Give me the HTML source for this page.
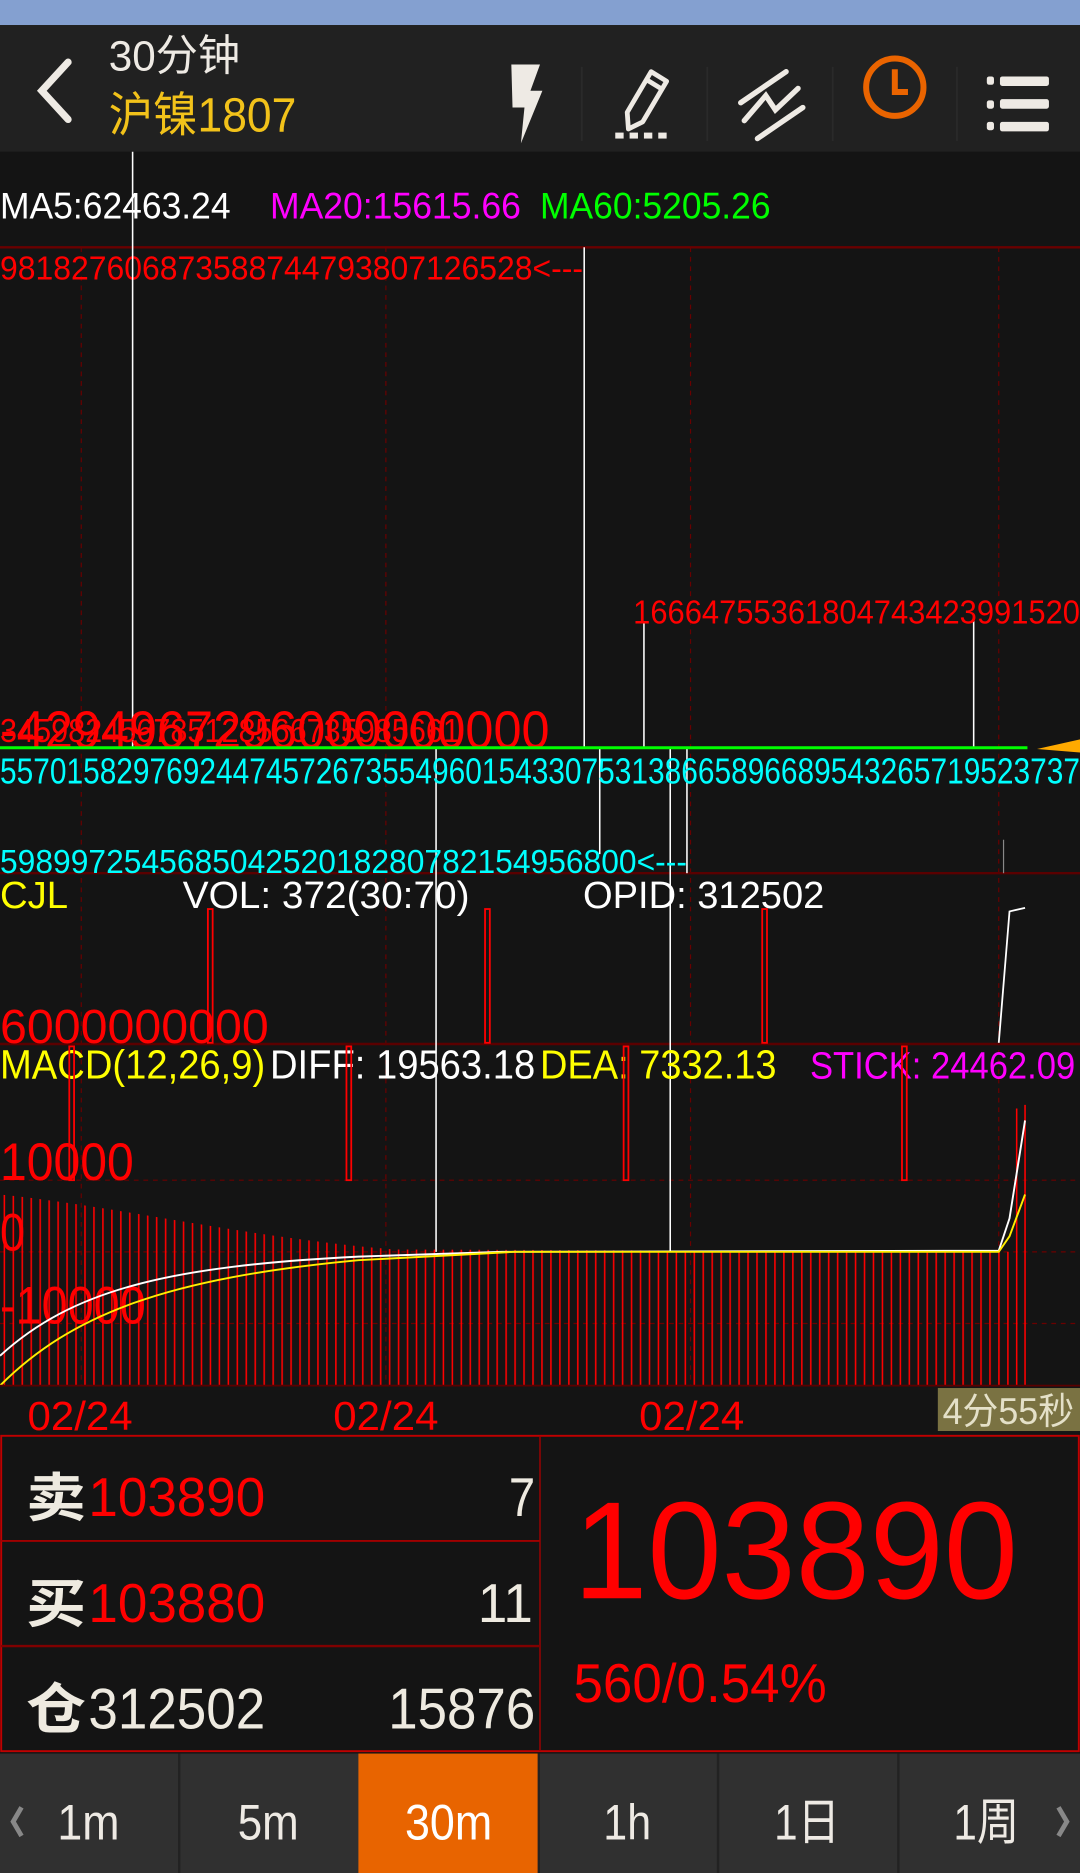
<!DOCTYPE html>
<html><head><meta charset="utf-8"><style>
html,body{margin:0;padding:0;background:#141414;overflow:hidden}
svg{display:block}
text{font-family:"Liberation Sans","Noto Sans CJK SC",sans-serif}
</style></head><body>
<svg width="1080" height="1873" viewBox="0 0 904 1568" preserveAspectRatio="none" xmlns="http://www.w3.org/2000/svg">
<defs>
<pattern id="bars" x="0" y="0" width="7.5" height="10" patternUnits="userSpaceOnUse">
<rect x="3" y="0" width="1.3" height="10" fill="#ff0000"/>
</pattern>
</defs>
<rect x="0" y="0" width="904" height="1568" fill="#141414"/>
<rect x="0" y="0" width="904" height="21" fill="#84a0d0"/>
<rect x="0" y="21" width="904" height="106" fill="#212121"/>
<path d="M57 52 L35 76 L57 100" stroke="#eeeae4" stroke-width="6" fill="none" stroke-linecap="round"/>
<text x="91" y="59" font-size="36" fill="#eeeae4" textLength="110" lengthAdjust="spacingAndGlyphs">30分钟</text>
<text x="91" y="110" font-size="40" fill="#f2c21a" textLength="157" lengthAdjust="spacingAndGlyphs">沪镍1807</text>
<path d="M428 54 L452 54 L444 76 L454 76 L436 120 L439 90 L429 90 Z" fill="#eeeae4"/>
<g stroke="#2a2a2a" stroke-width="1.5"><line x1="487" y1="56" x2="487" y2="118"/><line x1="592" y1="56" x2="592" y2="118"/><line x1="697" y1="56" x2="697" y2="118"/><line x1="801" y1="56" x2="801" y2="118"/></g>
<path d="M545 60 L558 68 L538 102 L526 108 L525 94 Z" stroke="#eeeae4" stroke-width="4" fill="none" stroke-linejoin="round"/>
<line x1="540" y1="66" x2="553" y2="74" stroke="#eeeae4" stroke-width="4"/>
<g fill="#eeeae4"><rect x="515" y="111" width="7" height="5"/><rect x="527" y="111" width="7" height="5"/><rect x="539" y="111" width="7" height="5"/><rect x="551" y="111" width="7" height="5"/></g>
<path d="M620 86 L658 60 M623 101 L641 80 L649 92 L668 74 M634 116 L672 90" stroke="#eeeae4" stroke-width="4.5" fill="none" stroke-linecap="round"/>
<circle cx="749" cy="73" r="24" stroke="#ea6400" stroke-width="5" fill="none"/>
<path d="M749 58 L749 77 L760 77" stroke="#ea6400" stroke-width="5" fill="none"/>
<g fill="#eeeae4"><rect x="826" y="64" width="6" height="7" rx="2"/><rect x="826" y="84" width="6" height="7" rx="2"/><rect x="826" y="102" width="6" height="7" rx="2"/>
<rect x="837" y="64" width="41" height="8" rx="2"/><rect x="837" y="83" width="41" height="8" rx="2"/><rect x="837" y="102" width="41" height="8" rx="2"/></g>

<g stroke="#6a0000" stroke-width="1" stroke-dasharray="4,4">
<line x1="68" y1="207" x2="68" y2="1160"/><line x1="323" y1="207" x2="323" y2="1160"/><line x1="578" y1="207" x2="578" y2="1160"/><line x1="836" y1="207" x2="836" y2="1160"/>
<line x1="0" y1="988" x2="904" y2="988"/><line x1="0" y1="1048" x2="904" y2="1048"/><line x1="0" y1="1108" x2="904" y2="1108"/>
</g>
<line x1="0" y1="207" x2="904" y2="207" stroke="#6a0000" stroke-width="2"/>
<line x1="0" y1="731" x2="904" y2="731" stroke="#5a0000" stroke-width="2"/>
<line x1="0" y1="874" x2="904" y2="874" stroke="#5a0000" stroke-width="2"/>

<text x="0" y="183" font-size="31" fill="#ffffff" textLength="193" lengthAdjust="spacingAndGlyphs">MA5:62463.24</text>
<text x="226" y="183" font-size="31" fill="#ff00ff" textLength="210" lengthAdjust="spacingAndGlyphs">MA20:15615.66</text>
<text x="452" y="183" font-size="31" fill="#00ff00" textLength="193" lengthAdjust="spacingAndGlyphs">MA60:5205.26</text>
<text x="0" y="234" font-size="28" fill="#ff0000" textLength="488" lengthAdjust="spacingAndGlyphs">981827606873588744793807126528&lt;---</text>

<g stroke="#ffffff" stroke-width="1.3">
<line x1="111" y1="127" x2="111" y2="626"/><line x1="489" y1="207" x2="489" y2="626"/>
<line x1="539" y1="520" x2="539" y2="626"/><line x1="815" y1="520" x2="815" y2="626"/>
<line x1="365" y1="626" x2="365" y2="1048"/><line x1="561" y1="626" x2="561" y2="1048"/>
<line x1="502" y1="626" x2="502" y2="715"/><line x1="575" y1="626" x2="575" y2="731"/>
</g>
<line x1="840" y1="703" x2="840" y2="731" stroke="#888" stroke-width="1"/>
<text x="530" y="522" font-size="28" fill="#ff0000" textLength="374" lengthAdjust="spacingAndGlyphs">16664755361804743423991520</text>
<text x="0" y="621" font-size="28" fill="#ff0000" textLength="385" lengthAdjust="spacingAndGlyphs">345982456785128566735985661</text>
<text x="0" y="626" font-size="44" fill="#ff0000" textLength="460" lengthAdjust="spacingAndGlyphs">-4294967296000000000</text>
<line x1="0" y1="626" x2="860" y2="626" stroke="#00ff00" stroke-width="2.5"/>
<path d="M868 627 L904 619 L904 630 Z" fill="#ffaa00"/>
<text x="0" y="656" font-size="30" fill="#00ffff" textLength="904" lengthAdjust="spacingAndGlyphs">55701582976924474572673554960154330753138665896689543265719523737</text>
<text x="0" y="731" font-size="28" fill="#00ffff" textLength="575" lengthAdjust="spacingAndGlyphs">598997254568504252018280782154956800&lt;---</text>

<text x="0" y="760" font-size="32" fill="#ffff00" textLength="57" lengthAdjust="spacingAndGlyphs">CJL</text>
<text x="153" y="760" font-size="32" fill="#ffffff" textLength="240" lengthAdjust="spacingAndGlyphs">VOL: 372(30:70)</text>
<text x="488" y="760" font-size="32" fill="#ffffff" textLength="202" lengthAdjust="spacingAndGlyphs">OPID: 312502</text>
<g stroke="#ff0000" stroke-width="1.5" fill="none">
<rect x="174" y="761" width="4" height="112"/><rect x="406" y="761" width="4" height="112"/><rect x="638" y="761" width="4" height="112"/>
</g>
<path d="M836 873 L845 763 L858 760" stroke="#ffffff" stroke-width="1.5" fill="none"/>
<text x="0" y="873" font-size="40" fill="#ff0000" textLength="225" lengthAdjust="spacingAndGlyphs">6000000000</text>

<text x="0" y="903" font-size="34" fill="#ffff00" textLength="222" lengthAdjust="spacingAndGlyphs">MACD(12,26,9)</text>
<text x="226" y="903" font-size="34" fill="#ffffff" textLength="222" lengthAdjust="spacingAndGlyphs">DIFF: 19563.18</text>
<text x="452" y="903" font-size="34" fill="#ffff00" textLength="198" lengthAdjust="spacingAndGlyphs">DEA: 7332.13</text>
<text x="678" y="903" font-size="32" fill="#ff00ff" textLength="222" lengthAdjust="spacingAndGlyphs">STICK: 24462.09</text>
<g stroke="#ff0000" stroke-width="1.5" fill="none">
<rect x="58" y="876" width="4" height="112"/><rect x="290" y="876" width="4" height="112"/><rect x="522" y="876" width="4" height="112"/><rect x="755" y="876" width="4" height="112"/>
</g>
<path d="M0 1000 C100 1010 200 1035 330 1046 L850 1048 L850 1160 L0 1160 Z" fill="url(#bars)"/>
<line x1="851" y1="928" x2="851" y2="1160" stroke="#ff0000" stroke-width="1.3"/>
<line x1="858" y1="925" x2="858" y2="1160" stroke="#ff0000" stroke-width="1.3"/>
<text x="0" y="988" font-size="44" fill="#ff0000" textLength="112" lengthAdjust="spacingAndGlyphs">10000</text>
<text x="0" y="1047" font-size="44" fill="#ff0000" textLength="21" lengthAdjust="spacingAndGlyphs">0</text>
<text x="0" y="1108" font-size="44" fill="#ff0000" textLength="122" lengthAdjust="spacingAndGlyphs">-10000</text>
<path d="M0 1135 C60 1080 140 1060 300 1052 L420 1048 L836 1047 L845 1020 L858 938" stroke="#ffffff" stroke-width="1.6" fill="none"/>
<path d="M0 1160 C60 1100 140 1070 300 1055 L430 1048 L836 1048 L845 1035 L858 1000" stroke="#ffee00" stroke-width="1.6" fill="none"/>
<line x1="0" y1="1160" x2="904" y2="1160" stroke="#5a0000" stroke-width="1.5"/>

<text x="23" y="1197" font-size="34" fill="#ff0000" textLength="88" lengthAdjust="spacingAndGlyphs">02/24</text>
<text x="279" y="1197" font-size="34" fill="#ff0000" textLength="88" lengthAdjust="spacingAndGlyphs">02/24</text>
<text x="535" y="1197" font-size="34" fill="#ff0000" textLength="88" lengthAdjust="spacingAndGlyphs">02/24</text>
<rect x="785" y="1162" width="119" height="36" fill="#7a7242"/>
<text x="789" y="1192" font-size="31" fill="#e4e0c8" textLength="110" lengthAdjust="spacingAndGlyphs">4分55秒</text>

<rect x="1" y="1202" width="902" height="264" fill="#141414" stroke="#c00000" stroke-width="1.6"/>
<line x1="452" y1="1202" x2="452" y2="1466" stroke="#a00000" stroke-width="1.2"/>
<line x1="1" y1="1290" x2="452" y2="1290" stroke="#a00000" stroke-width="1.6"/>
<line x1="1" y1="1378" x2="452" y2="1378" stroke="#800000" stroke-width="2"/>
<text x="22" y="1269" font-size="44" font-weight="bold" fill="#eeeae0" textLength="50" lengthAdjust="spacingAndGlyphs">卖</text>
<text x="74" y="1269" font-size="46" fill="#ff0000" textLength="148" lengthAdjust="spacingAndGlyphs">103890</text>
<text x="426" y="1269" font-size="46" fill="#eeeae0" textLength="22" lengthAdjust="spacingAndGlyphs">7</text>
<text x="22" y="1358" font-size="44" font-weight="bold" fill="#eeeae0" textLength="50" lengthAdjust="spacingAndGlyphs">买</text>
<text x="74" y="1358" font-size="46" fill="#ff0000" textLength="148" lengthAdjust="spacingAndGlyphs">103880</text>
<text x="400" y="1358" font-size="46" fill="#eeeae0" textLength="46" lengthAdjust="spacingAndGlyphs">11</text>
<text x="22" y="1447" font-size="46" font-weight="bold" fill="#eeeae0" textLength="50" lengthAdjust="spacingAndGlyphs">仓</text>
<text x="74" y="1447" font-size="48" fill="#eeeae0" textLength="148" lengthAdjust="spacingAndGlyphs">312502</text>
<text x="325" y="1447" font-size="48" fill="#eeeae0" textLength="123" lengthAdjust="spacingAndGlyphs">15876</text>
<text x="480" y="1338" font-size="116" fill="#ff0000" textLength="372" lengthAdjust="spacingAndGlyphs">103890</text>
<text x="480" y="1425" font-size="46" fill="#ff0000" textLength="212" lengthAdjust="spacingAndGlyphs">560/0.54%</text>

<rect x="0" y="1468" width="904" height="100" fill="#303030"/>
<g stroke="#222" stroke-width="2"><line x1="150" y1="1468" x2="150" y2="1568"/><line x1="451" y1="1468" x2="451" y2="1568"/><line x1="601" y1="1468" x2="601" y2="1568"/><line x1="752" y1="1468" x2="752" y2="1568"/></g>
<rect x="300" y="1468" width="150" height="100" fill="#e86400"/>
<path d="M18 1513 L11 1525 L18 1537" stroke="#888" stroke-width="4" fill="none"/>
<path d="M886 1513 L893 1525 L886 1537" stroke="#888" stroke-width="4" fill="none"/>
<g font-size="42" fill="#eeeae4">
<text x="48" y="1540" textLength="52" lengthAdjust="spacingAndGlyphs">1m</text>
<text x="199" y="1540" textLength="51" lengthAdjust="spacingAndGlyphs">5m</text>
<text x="339" y="1540" fill="#ffffff" textLength="73" lengthAdjust="spacingAndGlyphs">30m</text>
<text x="505" y="1540" textLength="40" lengthAdjust="spacingAndGlyphs">1h</text>
<text x="648" y="1540" textLength="55" lengthAdjust="spacingAndGlyphs">1日</text>
<text x="798" y="1540" textLength="55" lengthAdjust="spacingAndGlyphs">1周</text>
</g>
</svg>
</body></html>
